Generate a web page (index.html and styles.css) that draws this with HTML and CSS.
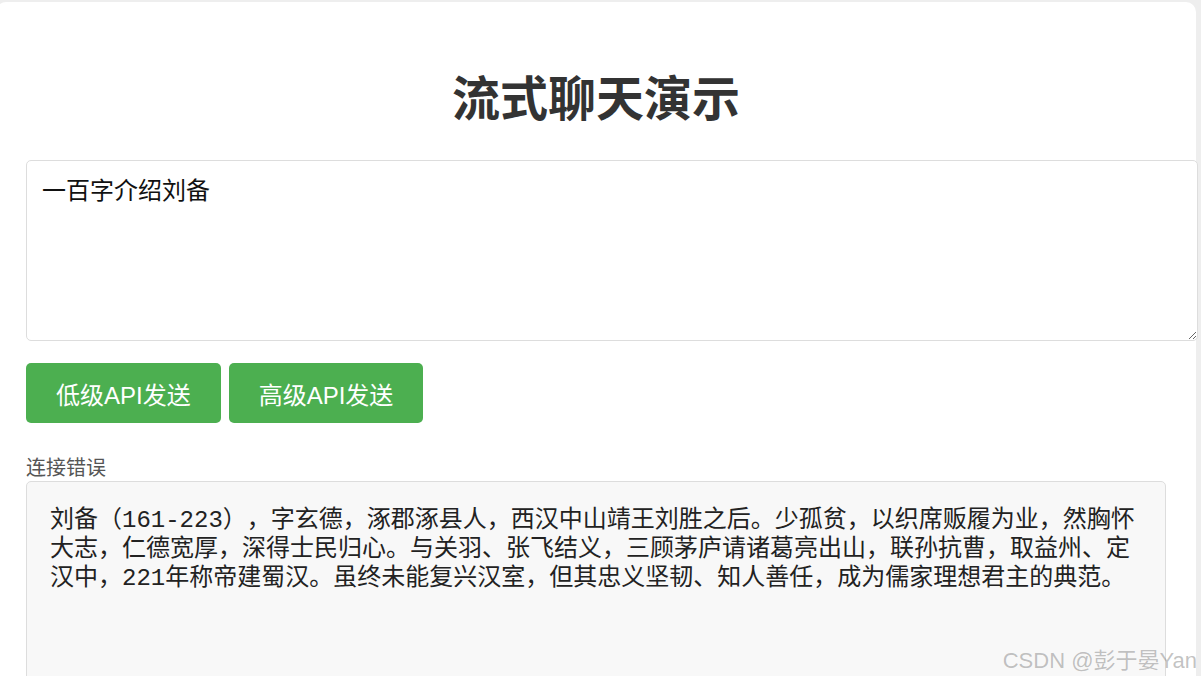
FILE: index.html
```html
<!DOCTYPE html>
<html lang="zh-CN">
<head>
  <meta charset="UTF-8">
  <meta name="viewport" content="width=device-width, initial-scale=1.0">
  <title>流式聊天演示</title>
  <link rel="stylesheet" href="styles.css">
</head>
<body>

  <div class="container">
    <h1>流式聊天演示</h1>

    <textarea id="prompt">一百字介绍刘备</textarea>

    <div class="buttons">
      <button id="lowBtn">低级API发送</button>
      <button id="highBtn">高级API发送</button>
    </div>

    <div class="status" id="status">连接错误</div>
    <div class="output" id="output">刘备（161-223），字玄德，涿郡涿县人，西汉中山靖王刘胜之后。少孤贫，以织席贩履为业，然胸怀大志，仁德宽厚，深得士民归心。与关羽、张飞结义，三顾茅庐请诸葛亮出山，联孙抗曹，取益州、定汉中，221年称帝建蜀汉。虽终未能复兴汉室，但其忠义坚韧、知人善任，成为儒家理想君主的典范。</div>
  </div>

  <div class="watermark">CSDN @彭于晏Yan</div>

</body>
</html>
```

FILE: styles.css
```css
body {
  font-family: Arial, "Liberation Sans", "Noto Sans CJK SC", sans-serif;
  background-color: #eeeeee;
  margin: 0;
  overflow: hidden;
}

.container {
  width: 1200px;
  box-sizing: border-box;
  margin: 2px 0 0 -4px;
  padding: 1px 30px 40px;
  background-color: #fff;
  border-radius: 10px;
  min-height: 700px;
}

h1 {
  text-align: center;
  color: #333;
  font-size: 48px;
  font-weight: bold;
  margin: 62px 0 25px;
  line-height: 70px;
}

textarea {
  display: block;
  width: 100%;
  height: 149px;
  padding: 13px 15px 17px;
  font-size: 24px;
  line-height: 30px;
  font-family: "Noto Sans CJK SC", serif;
  color: #111;
  border: 1px solid #ddd;
  border-radius: 5px;
  margin: 0;
}

.buttons {
  display: flex;
  gap: 8px;
  margin-top: 22px;
}

button {
  height: 60px;
  padding: 0 30px;
  font-size: 24px;
  font-family: Arial, "Liberation Sans", "Noto Sans CJK SC", sans-serif;
  color: #fff;
  background-color: #4CAF50;
  border: none;
  border-radius: 5px;
  cursor: pointer;
}

.status {
  margin-top: 32px;
  font-size: 20px;
  line-height: 26px;
  color: #555;
}

.output {
  background-color: #f8f8f8;
  border: 1px solid #ddd;
  border-radius: 5px;
  padding: 24px 23px 20px;
  font-size: 24px;
  line-height: 29px;
  color: #222;
  font-family: "Liberation Mono", "Noto Sans CJK SC", monospace;
  white-space: pre-wrap;
  text-spacing-trim: space-all;
  min-height: 300px;
}

.watermark {
  position: absolute;
  right: 4px;
  top: 642px;
  font-size: 22px;
  color: rgba(120, 120, 120, 0.45);
  font-family: Arial, "Liberation Sans", "Noto Sans CJK SC", sans-serif;
}
```
